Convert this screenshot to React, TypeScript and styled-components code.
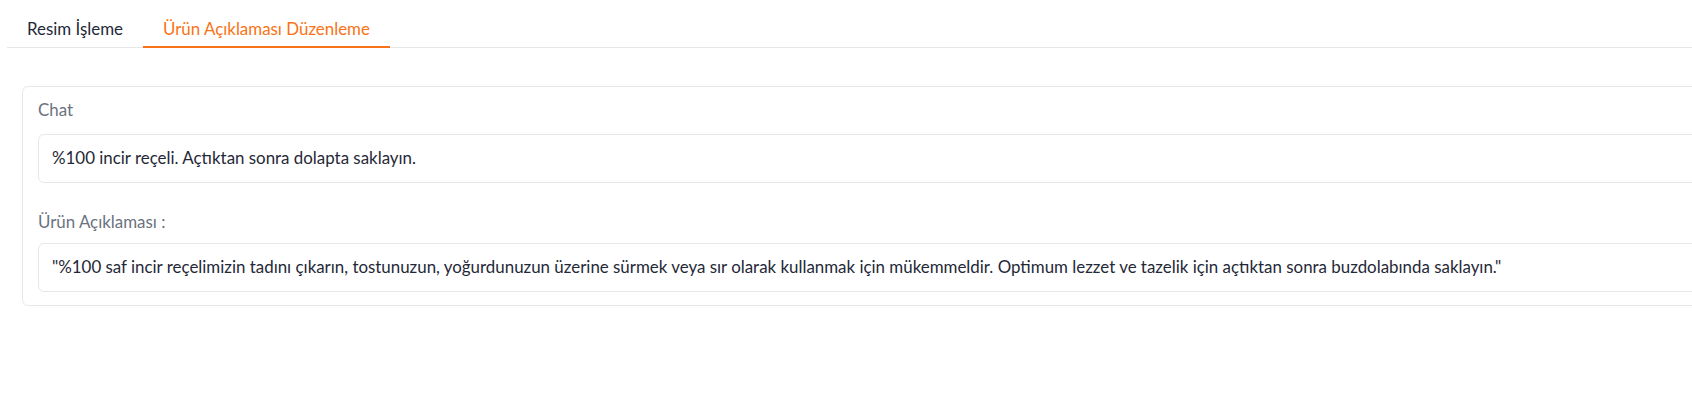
import React from "react";
import styled, {createGlobalStyle} from "styled-components";

const GlobalStyle = createGlobalStyle`
  html, body {
    margin: 0;
    padding: 0;
    background: #ffffff;
    overflow: hidden;
  }

  body {
    font-family: "Lato", "Noto Sans", sans-serif;
    color: #1f2937;
  }
`

interface ITab {
    title: string
}

const tabs: Array<ITab> = [
    {title: "Resim İşleme"},
    {title: "Ürün Açıklaması Düzenleme"},
];

const ACTIVE_TAB = 1;

const chatText = "%100 incir reçeli. Açtıktan sonra dolapta saklayın.";
const descriptionText = "\"%100 saf incir reçelimizin tadını çıkarın, tostunuzun, yoğurdunuzun üzerine sürmek veya sır olarak kullanmak için mükemmeldir. Optimum lezzet ve tazelik için açtıktan sonra buzdolabında saklayın.\"";

const App: React.FC = () => {
    return (
        <>
            <GlobalStyle />
            <Page>
                <TabBar>
                    {tabs.map((tab, i) => (
                        <TabButton key={tab.title} $active={i === ACTIVE_TAB}>
                            {tab.title}
                        </TabButton>
                    ))}
                </TabBar>

                <TabContent>
                    <Panel>
                        <Field>
                            <FieldLabel>Chat</FieldLabel>
                            <TextBox>{chatText}</TextBox>
                        </Field>

                        <Field $spaced>
                            <FieldLabel $tight>Ürün Açıklaması :</FieldLabel>
                            <TextBox>{descriptionText}</TextBox>
                        </Field>
                    </Panel>
                </TabContent>
            </Page>
        </>
    );
}

const Page = styled.div`
  width: 1760px;
  padding: 10px 0 0 7px;
`

const TabBar = styled.div`
  display: flex;
  border-bottom: 1px solid #e5e7eb;
`

const TabButton = styled.div<{ $active?: boolean }>`
  height: 38px;
  line-height: 38px;
  padding: 0 20px;
  font-size: 16.9px;
  color: ${props => props.$active ? "#f97316" : "#1f2937"};
  box-shadow: ${props => props.$active ? "inset 0 -2px 0 #f97316" : "none"};
  margin-bottom: -1px;
  white-space: nowrap;
`

const TabContent = styled.div`
  padding: 38px 0 0 15px;
`

const Panel = styled.div`
  border: 1px solid #e5e7eb;
  border-radius: 6px;
  padding: 13px 15px 13px 15px;
`

const Field = styled.div<{ $spaced?: boolean }>`
  display: flex;
  flex-direction: column;
  margin-top: ${props => props.$spaced ? "29px" : "0"};
`

const FieldLabel = styled.span<{ $tight?: boolean }>`
  font-size: 16.9px;
  line-height: 20px;
  color: #6b7280;
  margin-bottom: ${props => props.$tight ? "11px" : "14px"};
`

const TextBox = styled.div`
  box-sizing: border-box;
  display: flex;
  align-items: center;
  height: 49px;
  border: 1px solid #e5e7eb;
  border-radius: 6px;
  padding: 0 13px 3px;
  font-size: 16.9px;
  color: #1f2937;
  white-space: nowrap;
`

export default App;
